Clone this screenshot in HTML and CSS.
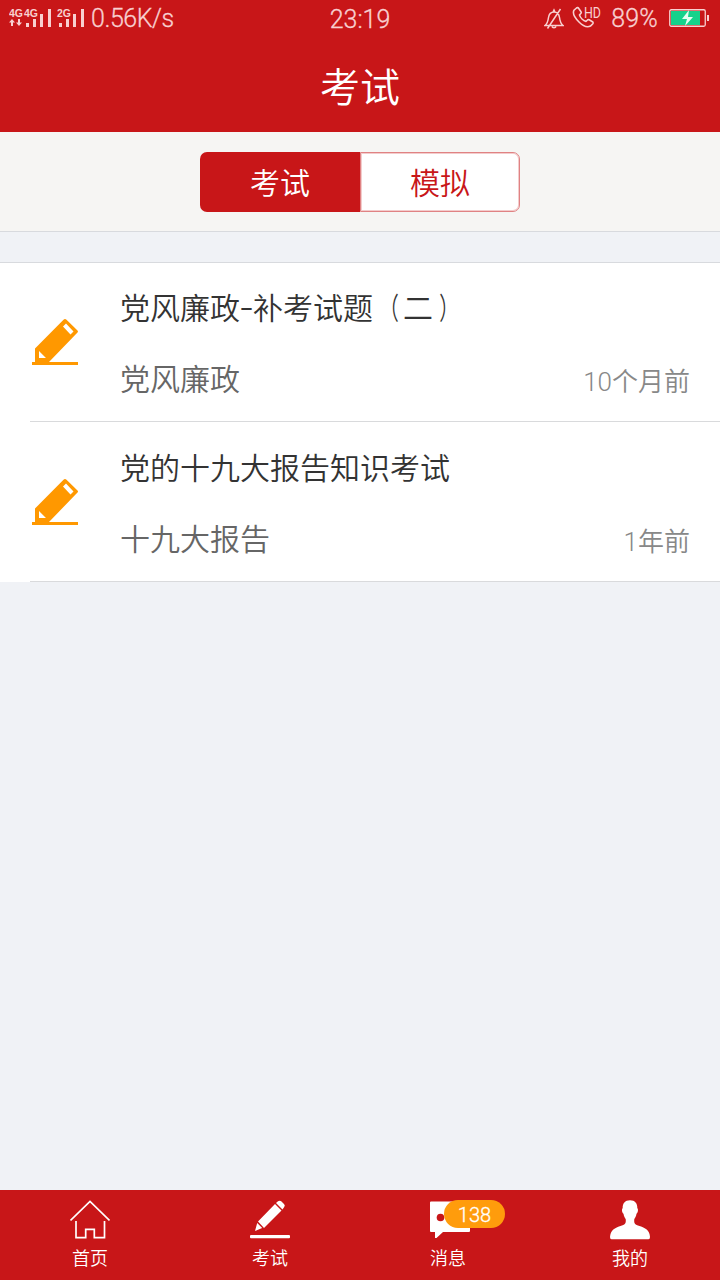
FILE: index.html
```html
<!DOCTYPE html>
<html lang="zh-CN">
<head>
<meta charset="utf-8">
<title>考试</title>
<link rel="stylesheet" href="styles.css">
</head>
<body>
<div class="app">
  <div class="status">
    <div class="status-left">
      <svg class="signal" width="78" height="24" viewBox="0 0 78 24" fill="currentColor">
        <g font-family="Liberation Sans" font-size="10" font-weight="bold">
          <text x="0" y="7.500" textLength="14" lengthAdjust="spacingAndGlyphs">4G</text>
          <text x="15" y="7.500" textLength="14" lengthAdjust="spacingAndGlyphs">4G</text>
          <text x="48" y="7.500" textLength="14" lengthAdjust="spacingAndGlyphs">2G</text>
        </g>
        <path d="M0 13.500l3-3.500 3 3.500H4V17H2v-3.500zM7 13.500h2V10h2v3.500h2l-3 3.500z"/>
        <path d="M17 14h3v4h-3zM24 10h3v8h-3zM31 5h3v13h-3zM39 0h3v18h-3zM50 14h3v4h-3zM57 10h3v8h-3zM64 5h3v13h-3zM72 0h3v18h-3z"/>
      </svg>
      <span class="speed">0.56K/s</span>
    </div>
    <span class="clock">23:19</span>
    <div class="status-right">
      <svg class="bell" width="20" height="22" viewBox="0 0 20 22" fill="none" stroke="currentColor" stroke-width="1.500">
        <path d="M1 17.500c2.500-2 3-4 3.500-8 .5-3.500 2.500-5.500 5.500-5.500s5 2 5.500 5.500c.5 4 1 6 3.500 8zM9 4l1-2 1 2M8 18.500c.5 1.700 3.500 1.700 4 0M16.500 1L3.500 20.500"/>
      </svg>
      <svg class="call" width="32" height="26" viewBox="0 0 32 26">
        <path d="M4.500 5L2 7.200C.5 10 3 15 7 19s8.500 5.500 11.500 4l2.300-2.300c.6-.8.300-1.500-.4-2l-3.200-1.900c-.9-.5-1.500-.2-2 .4l-1.200 1.200c-2.700-.8-5.700-3.900-6.500-6.500L8.800 10.500c.6-.6.600-1.200.2-1.800L6.600 5.300c-.5-.7-1.300-.9-2.100-.3z" fill="none" stroke="currentColor" stroke-width="1.600"/>
        <text x="12" y="14.500" font-family="Roboto" font-size="14.500" font-weight="400" textLength="17" lengthAdjust="spacingAndGlyphs" fill="currentColor">HD</text>
      </svg>
      <span class="percent">89%</span>
      <svg class="battery" width="42" height="18" viewBox="0 0 42 18">
        <rect x=".75" y=".75" width="35.500" height="16.500" rx="1.500" fill="none" stroke="currentColor" stroke-width="1.300"/>
        <path d="M2 2h29v14H2z" fill="#15d28b"/>
        <path d="M38 6h2v6h-2z" fill="currentColor"/>
        <path d="M20 1L13 10h5l-2 7 8-9h-5z" fill="#e5fff2"/>
      </svg>
    </div>
  </div>
  <header class="header">考试</header>
  <div class="tabs">
    <div class="segment">
      <div class="seg seg-on">考试</div>
      <div class="seg seg-off">模拟</div>
    </div>
  </div>
  <main class="list">
    <div class="row">
      <svg class="pencil" width="48" height="48" viewBox="0 0 48 48">
        <path d="M1 44h3V30.500L32.500 1.800q1.500-1.500 3 0l11 10.700q1 1 0 2L18 44H47V47H1zM8 33V40h7zM35 5.500L32 8.500l7.500 8 3-3z" fill="#ff9800" fill-rule="evenodd"/>
      </svg>
      <div class="row-body">
        <div class="row-title">党风廉政<span class="dash">-</span>补考试题<span class="paren paren-open">（</span>二<span class="paren">）</span></div>
        <div class="row-meta"><span class="category">党风廉政</span><span class="time">10个月前</span></div>
      </div>
    </div>
    <div class="row">
      <svg class="pencil" width="48" height="48" viewBox="0 0 48 48">
        <path d="M1 44h3V30.500L32.500 1.800q1.500-1.500 3 0l11 10.700q1 1 0 2L18 44H47V47H1zM8 33V40h7zM35 5.500L32 8.500l7.500 8 3-3z" fill="#ff9800" fill-rule="evenodd"/>
      </svg>
      <div class="row-body">
        <div class="row-title">党的十九大报告知识考试</div>
        <div class="row-meta"><span class="category">十九大报告</span><span class="time">1年前</span></div>
      </div>
    </div>
  </main>
  <nav class="nav">
    <div class="nav-item">
      <svg width="40" height="40" viewBox="0 0 40 40" fill="none" stroke="#fff" stroke-width="1.700">
        <path d="M.5 20.500L20 1.500l19.500 19M6 21v16.700h9.700v-8.400h8.600v8.400H34.500V21"/>
      </svg>
      <span class="nav-label">首页</span>
    </div>
    <div class="nav-item">
      <svg width="40" height="40" viewBox="0 0 40 40" fill="#fff">
        <path d="M25 4l6.500 6.500L14 28 8 21.500zM26 3l2-1.700q2-1.300 3.500.2l2.500 2.500q1.500 1.500.2 3L32.500 9.500zM7.200 23l5 5L5 31z"/>
        <rect y="35" width="40" height="3.200" rx="1"/>
      </svg>
      <span class="nav-label">考试</span>
    </div>
    <div class="nav-item nav-message">
      <svg width="40" height="40" viewBox="0 0 40 40">
        <path d="M1 1.500h38q1 0 1 1V31q0 1-1 1H13L6.500 38H5v-6H1q-1 0-1-1V2.500q0-1 1-1z" fill="#fff"/>
        <circle cx="10.500" cy="17.500" r="3.800" fill="#c81618"/>
      </svg>
      <span class="badge">138</span>
      <span class="nav-label">消息</span>
    </div>
    <div class="nav-item">
      <svg width="40" height="40" viewBox="0 0 40 40" fill="#fff">
        <path d="M20 .3c5 0 7.500 3 7.300 8 1.200.5.800 4.500-.8 5.500-.4 2.500-1.200 4-2.200 5.200-.5 5 .7 5.500 5.200 7 6.500 2 10 4.500 10.500 11q0 2.300-1.500 2.300h-37Q0 39.300 0 37c.5-6.500 4-9 10.500-11 4.500-1.500 5.700-2 5.200-7-1-1.200-1.800-2.700-2.200-5.200-1.600-1-2-5-.8-5.500C12.500 3.300 15 .3 20 .3z"/>
      </svg>
      <span class="nav-label">我的</span>
    </div>
  </nav>
</div>
</body>
</html>
```
FILE: styles.css
```css
* { box-sizing: border-box; }
body {
  margin: 0;
  font-family: "Noto Sans CJK SC", sans-serif;
  font-weight: 350;
}
svg { display: block; flex: none; }
.app {
  width: 720px;
  height: 1280px;
  display: flex;
  flex-direction: column;
  background: #f0f2f6;
  overflow: hidden;
  white-space: nowrap;
}
.status {
  height: 40px;
  display: grid;
  grid-template-columns: 1fr auto 1fr;
  background: #c81618;
  color: #f8d0d0;
  font-family: Roboto, "Noto Sans CJK SC", sans-serif;
  font-weight: 300;
  font-size: 25px;
  line-height: 38px;
  -webkit-text-stroke: .3px currentColor;
}
.status svg { -webkit-text-stroke: 0; }
.status-left { display: flex; padding-left: 9px; }
.signal { margin-top: 9px; }
.speed { margin-left: 4px; letter-spacing: -.45px; }
.clock { padding-top: 1px; }
.status-right { display: flex; justify-content: flex-end; padding-right: 9px; }
.bell { margin: 8px 8px 0 0; }
.call { margin: 3px 7px 0 0; }
.percent { letter-spacing: .2px; }
.battery { margin: 9px 0 0 11px; width: 42px; }
.header {
  height: 92px;
  background: #c81618;
  color: #fff;
  font-size: 40px;
  line-height: 90px;
  text-align: center;
}
.tabs {
  height: 100px;
  padding: 20px 200px 0;
  background: #f6f5f3;
  border-bottom: 1px solid #d8dade;
}
.segment { display: flex; height: 60px; }
.seg {
  width: 160px;
  font-size: 30px;
  line-height: 58px;
  text-align: center;
}
.seg-on { background: #c81618; color: #fff; border-radius: 7px 0 0 7px; }
.seg-off {
  background: #fff;
  color: #c81618;
  border: 1px solid #e08283;
  box-shadow: inset 0 0 0 1px #f3cccc;
  border-radius: 0 7px 7px 0;
  line-height: 56px;
}
.list { flex: 1; padding-top: 30px; }
.row {
  height: 160px;
  display: flex;
  padding-left: 31px;
  background: linear-gradient(#d9dadc, #d9dadc) 30px 100% / 100% 1px no-repeat #fff;
}
.row:first-child { border-top: 1px solid #d8dade; }
.pencil { margin: 56px 41px 0 0; }
.row:first-child .pencil { margin-top: 55px; }
.row-body {
  flex: 1;
  padding: 22px 30px 0 0;
  font-family: Roboto, "Noto Sans CJK SC", sans-serif;
}
.row:first-child .row-body { padding-top: 21px; }
.row-title { font-family: "Noto Sans CJK SC", sans-serif; font-size: 30px; line-height: 44px; color: #333; }
.dash { display: inline-block; width: 13px; text-align: center; transform: translateY(-2px) scaleX(1.35); }
.paren { display: inline-block; width: 30px; transform: translateX(1px) scaleX(.65); }
.row-meta {
  display: flex;
  justify-content: space-between;
  margin-top: 30px;
  line-height: 44px;
  font-size: 30px;
  color: #666;
}
.time { font-size: 26px; line-height: 48px; color: #888; }
.nav {
  height: 90px;
  display: grid;
  grid-template-columns: repeat(4, 1fr);
  background: #c81618;
  color: #fff;
}
.nav-item {
  position: relative;
  display: flex;
  flex-direction: column;
  align-items: center;
  padding-top: 10px;
}
.nav-label { font-size: 18px; line-height: 26px; margin-top: 4px; }
.nav-message .nav-label { margin-right: 4px; }
.badge {
  position: absolute;
  left: 84px;
  top: 10px;
  width: 61px;
  height: 28px;
  border-radius: 14px;
  background: #ff9c0c;
  font-family: Roboto, sans-serif;
  font-weight: 300;
  font-size: 20px;
  line-height: 31px;
  text-align: center;
  -webkit-text-stroke: .3px currentColor;
}
```
